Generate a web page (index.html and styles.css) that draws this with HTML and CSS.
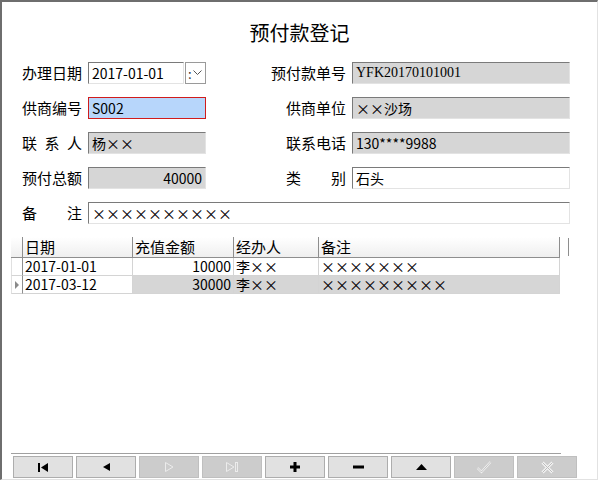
FILE: index.html
```html
<!DOCTYPE html>
<html lang="zh-CN">
<head>
  <meta charset="UTF-8"/>
  <title>预付款登记</title>
  <link rel="stylesheet" href="styles.css">
</head>
<body>
  <div class="window">
    <h1 class="title">预付款登记</h1>

    <div class="form">
      <span class="label">办理日期</span>
      <div class="date-field">
        <span class="field">2017-01-01</span>
        <span class="drop">:<svg width="9" height="6" viewBox="0 0 9 6"><polyline points="0.5,0.5 4.5,4.5 8.5,0.5" fill="none" stroke="#555" stroke-width="1"/></svg></span>
      </div>
      <span class="label">预付款单号</span>
      <span class="field readonly serif">YFK20170101001</span>

      <span class="label">供商编号</span>
      <span class="field focused">S002</span>
      <span class="label">供商单位</span>
      <span class="field readonly">××沙场</span>

      <span class="label"><span class="spread">联 系 人</span></span>
      <span class="field readonly">杨××</span>
      <span class="label">联系电话</span>
      <span class="field readonly">130****9988</span>

      <span class="label">预付总额</span>
      <span class="field readonly num">40000</span>
      <span class="label"><span class="spread">类 别</span></span>
      <span class="field">石头</span>

      <span class="label"><span class="spread">备 注</span></span>
      <span class="field wide">××××××××××</span>
    </div>

    <!-- 充值记录 -->
    <div class="grid">
      <div class="head row">
        <span class="sel"></span>
        <span class="cell">日期</span>
        <span class="cell">充值金额</span>
        <span class="cell">经办人</span>
        <span class="cell">备注</span>
        <span class="filler"></span>
      </div>
      <div class="row">
        <span class="sel"></span>
        <span class="cell date">2017-01-01</span>
        <span class="cell num">10000</span>
        <span class="cell">李××</span>
        <span class="cell">×××××××</span>
      </div>
      <div class="row current">
        <span class="sel"><svg width="4" height="8" viewBox="0 0 4 8"><polygon points="0,0 4,4 0,8" fill="#8a8a8a"/></svg></span>
        <span class="cell date">2017-03-12</span>
        <span class="cell num">30000</span>
        <span class="cell">李××</span>
        <span class="cell">×××××××××</span>
      </div>
    </div>

    <div class="navbar">
      <div class="nav-line"></div>
      <div class="buttons">
        <button class="nav-btn" title="首记录"><svg width="11" height="9" viewBox="0 0 11 9"><rect x="0" y="0" width="2" height="9"/><polygon points="10,0 3,4.5 10,9"/></svg></button>
        <button class="nav-btn" title="上一条"><svg width="7" height="8" viewBox="0 0 7 8"><polygon points="7,0 0,4 7,8"/></svg></button>
        <button class="nav-btn off" title="下一条"><svg width="12" height="12" viewBox="0 0 12 12"><polygon points="2.5,1.5 10,6 2.5,10.5" fill="none" stroke="#ececec"/></svg></button>
        <button class="nav-btn off" title="末记录"><svg width="14" height="12" viewBox="0 0 14 12"><polygon points="1.5,1.5 9,6 1.5,10.5" fill="none" stroke="#ececec"/><rect x="10.5" y="1.5" width="2" height="9" fill="none" stroke="#ececec"/></svg></button>
        <button class="nav-btn" title="新增"><svg width="10" height="10" viewBox="0 0 10 10"><rect x="3.5" y="0" width="3" height="10"/><rect x="0" y="3.5" width="10" height="3"/></svg></button>
        <button class="nav-btn" title="删除"><svg width="11" height="4" viewBox="0 0 11 4"><rect x="0" y="0.5" width="11" height="3"/></svg></button>
        <button class="nav-btn" title="修改"><svg width="11" height="6" viewBox="0 0 11 6"><polygon points="0,6 5.5,0 11,6"/></svg></button>
        <button class="nav-btn off" title="保存"><svg width="16" height="14" viewBox="0 0 16 14"><polyline points="1.5,8 5.5,12 14.5,2" fill="none" stroke="#f2f2f2" stroke-width="2.2"/><polyline points="1.5,8 5.5,12 14.5,2" fill="none" stroke="#b8b8b8" stroke-width="0.8"/></svg></button>
        <button class="nav-btn off" title="取消"><svg width="13" height="13" viewBox="0 0 13 13"><path d="M1.5 1.5 L11.5 11.5 M11.5 1.5 L1.5 11.5" fill="none" stroke="#f2f2f2" stroke-width="3"/><path d="M1.5 1.5 L11.5 11.5 M11.5 1.5 L1.5 11.5" fill="none" stroke="#bdbdbd" stroke-width="1"/></svg></button>
      </div>
    </div>
  </div>
</body>
</html>
```

FILE: styles.css
```css
body {
  margin: 0;
  background: #fff;
  font-family: "Noto Sans CJK SC", "Liberation Sans", sans-serif;
  color: #000;
}

.window {
  box-sizing: border-box;
  width: 598px;
  height: 480px;
  display: flex;
  flex-direction: column;
  border-left: 2px solid #6e6e6e;
  border-top: 2px solid #6e6e6e;
  border-right: 1px solid #e2e2e2;
  border-bottom: 1px solid #e2e2e2;
}

.title {
  margin: 19px 0 0;
  font-size: 20px;
  font-weight: normal;
  line-height: 24px;
  text-align: center;
}

/* Form */
.form {
  display: grid;
  grid-template-columns: 80px 118px 134px 218px;
  grid-auto-rows: 22px;
  column-gap: 6px;
  row-gap: 13px;
  margin-top: 17px;
}

.label {
  font-size: 15px;
  line-height: 22px;
  text-align: right;
  white-space: nowrap;
}

.spread {
  display: inline-block;
  width: 60px;
  text-align: justify;
  text-align-last: justify;
}

.field {
  box-sizing: border-box;
  height: 22px;
  padding: 0 3px;
  font-size: 14px;
  line-height: 20px;
  white-space: nowrap;
  background: #fff;
  border-top: 1px solid #7a7a7a;
  border-left: 1px solid #7a7a7a;
  border-right: 1px solid #e3e3e3;
  border-bottom: 1px solid #e3e3e3;
}

.field.readonly {
  background: #d6d6d6;
}

.field.focused {
  background: #b7d6fb;
  border: 1px solid #d01c1c;
}

.field.num {
  text-align: right;
}

.field.serif {
  font-family: "Liberation Serif", "Noto Sans CJK SC", serif;
}

.field.wide {
  grid-column: 2 / 5;
}

.date-field {
  display: flex;
  gap: 1px;
}

.date-field .field {
  width: 96px;
}

.drop {
  box-sizing: border-box;
  width: 21px;
  height: 22px;
  display: flex;
  align-items: center;
  gap: 1px;
  padding-left: 2px;
  font-size: 13px;
  color: #333;
  border: 1px solid #9a9a9a;
  background: #fff;
}

/* Data grid */
.grid {
  margin: 13px 0 0 9px;
  font-size: 14px;
}

.row {
  display: grid;
  grid-template-columns: 12px 110px 101px 85px 241px;
  height: 18px;
  line-height: 17px;
}

.row .cell,
.row .sel {
  box-sizing: border-box;
  white-space: nowrap;
  padding-left: 2px;
  border-right: 1px solid #d4d4d4;
  border-bottom: 1px solid #d4d4d4;
}

.row .sel {
  display: flex;
  align-items: center;
  padding-left: 3px;
  border-right-color: #8e8e8e;
  border-left: 1px solid #e0e0e0;
}

.row .cell.num {
  text-align: right;
  padding-right: 2px;
}

.row.current .cell:not(.date) {
  background: #d6d6d6;
}

.head {
  grid-template-columns: 12px 110px 101px 85px 241px 9px;
  height: 21px;
  line-height: 19px;
  font-size: 15px;
}

.head .cell,
.head .sel {
  background: linear-gradient(#ffffff, #efefef);
  border-left: none;
  border-right: 1px solid #8e8e8e;
  border-bottom: 1px solid #8e8e8e;
}

.head .filler {
  border-right: 1px solid #8e8e8e;
  margin: 1px 0 2px;
}

/* Navigation bar */
.navbar {
  margin-top: auto;
  margin-left: 9px;
  padding-bottom: 1px;
}

.nav-line {
  width: 550px;
  height: 1px;
  background: #a0a0a0;
}

.buttons {
  display: flex;
  gap: 3px;
  padding: 2px 0 0 2px;
}

.nav-btn {
  width: 60px;
  height: 22px;
  padding: 0;
  display: flex;
  align-items: center;
  justify-content: center;
  background: #e1e1e1;
  border: 1px solid #adadad;
  fill: #000;
}

.nav-btn.off {
  background: #cccccc;
  border-color: #bfbfbf;
}
```
